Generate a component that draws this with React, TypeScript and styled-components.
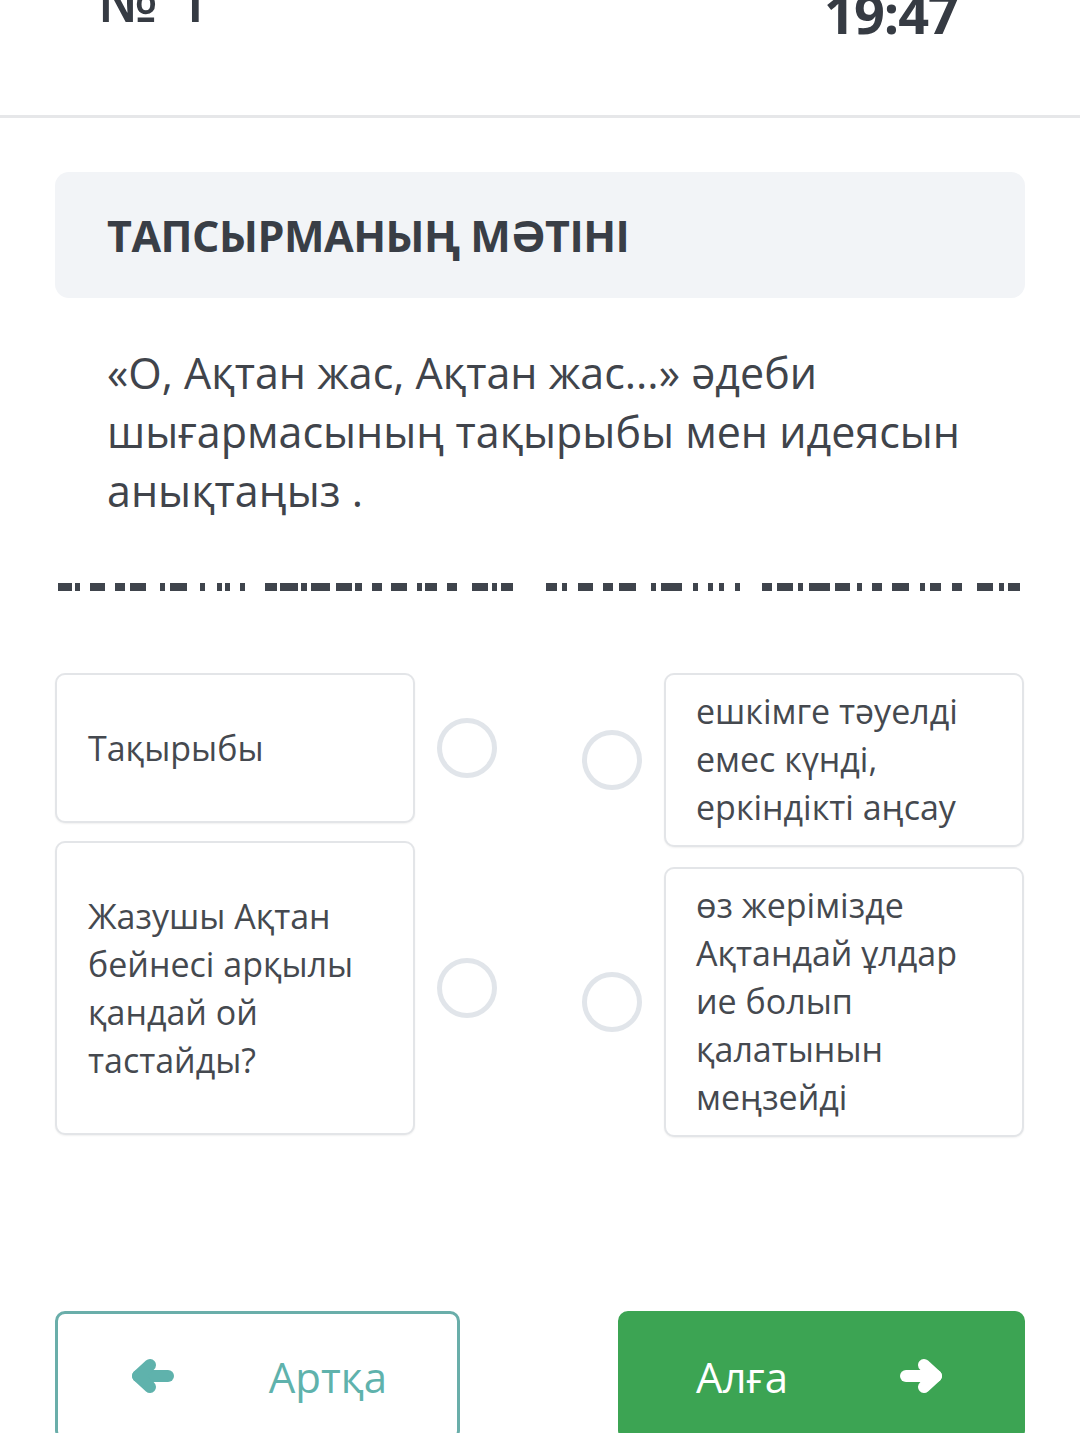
import React from "react";
import styled, { createGlobalStyle } from "styled-components";

const GlobalStyle = createGlobalStyle`
  html, body {
    margin: 0;
    padding: 0;
    background: #ffffff;
    font-family: "Open Sans", "Noto Sans", sans-serif;
  }
`;

// bits of the clipped line below the question, [x, width] in px
const strip: [number, number][] = [
  [58, 14], [75, 5], [90, 15], [115, 10], [130, 16], [160, 5], [170, 17],
  [200, 5], [217, 5], [225, 5], [240, 5], [265, 12], [280, 18], [301, 6],
  [311, 19], [336, 16], [355, 7], [372, 10], [391, 16], [417, 5], [425, 12],
  [447, 10], [472, 16], [492, 5], [501, 12], [546, 11], [562, 5], [578, 15],
  [603, 10], [619, 17], [651, 5], [661, 21], [693, 5], [708, 5], [719, 5],
  [735, 5], [762, 10], [777, 16], [798, 5], [809, 21], [835, 15], [857, 5],
  [872, 10], [892, 17], [920, 5], [930, 11], [952, 10], [977, 16], [999, 5],
  [1008, 12],
];

const leftItems = [
  { text: "Тақырыбы" },
  { text: "Жазушы Ақтан бейнесі арқылы қандай ой тастайды?" },
];

const rightItems = [
  { text: "ешкімге тәуелді емес күнді, еркіндікті аңсау" },
  { text: "өз жерімізде Ақтандай ұлдар ие болып қалатынын меңзейді" },
];

const Arrow = ({ dir }: { dir: "left" | "right" }) => (
  <svg
    width="44"
    height="36"
    viewBox="0 0 44 36"
    style={dir === "right" ? { transform: "scaleX(-1)" } : undefined}
  >
    <g fill="none" stroke="currentColor" strokeWidth="12" strokeLinecap="round" strokeLinejoin="round">
      <line x1="8" y1="18" x2="38" y2="18" />
      <polyline points="20,7 8,18 20,29" />
    </g>
  </svg>
);

export default function App() {
  return (
    <Page>
      <GlobalStyle />
      <TopBar>
        <TaskNo>№ 1</TaskNo>
        <Timer>19:47</Timer>
      </TopBar>

      <TitleCard>
        <TitleText>ТАПСЫРМАНЫҢ МӘТІНІ</TitleText>
      </TitleCard>

      <Question>«О, Ақтан жас, Ақтан жас...» әдеби шығармасының тақырыбы мен идеясын анықтаңыз .</Question>

      <Strip width="1080" height="10" viewBox="0 0 1080 10">
        {strip.map(([x, w], i) => (
          <rect key={i} x={x} y={1} width={w} height={8} fill="#3f444c" />
        ))}
      </Strip>

      <Matching>
        <Column gap={18}>
          {leftItems.map((item, i) => (
            <Pair key={i}>
              <Option side="left">{item.text}</Option>
              <Dot />
            </Pair>
          ))}
        </Column>
        <Column gap={20}>
          {rightItems.map((item, i) => (
            <Pair key={i}>
              <Dot />
              <Option side="right">{item.text}</Option>
            </Pair>
          ))}
        </Column>
      </Matching>

      <Nav>
        <NavButton variant="back">
          <Arrow dir="left" />
          <span>Артқа</span>
        </NavButton>
        <NavButton variant="next">
          <span>Алға</span>
          <Arrow dir="right" />
        </NavButton>
      </Nav>
    </Page>
  );
}

const Page = styled.div`
  width: 1080px;
  min-height: 1433px;
  overflow: hidden;
  background: #ffffff;
`;

const TopBar = styled.div`
  height: 115px;
  display: flex;
  justify-content: space-between;
  align-items: flex-start;
  padding: 0 122px 0 98px;
  border-bottom: 3px solid #e6e7e9;
  overflow: hidden;
  box-sizing: content-box;
`;

const TaskNo = styled.div`
  font-size: 58px;
  line-height: 56px;
  font-weight: 600;
  color: #363b43;
  margin-top: -28px;
  word-spacing: 4px;
`;

const Timer = styled.div`
  font-size: 54px;
  line-height: 56px;
  font-weight: 700;
  color: #363b43;
  margin-top: -15px;
  letter-spacing: -1px;
`;

const TitleCard = styled.div`
  margin: 54px 55px 0;
  height: 126px;
  border-radius: 14px;
  background: #f2f4f7;
  display: flex;
  align-items: center;
  padding: 0 52px;
`;

const TitleText = styled.div`
  font-size: 43px;
  font-weight: 700;
  color: #393e46;
  letter-spacing: -0.5px;
`;

const Question = styled.p`
  margin: 45px 80px 0 107px;
  font-size: 43px;
  line-height: 59px;
  color: #40444b;
`;

const Strip = styled.svg`
  display: block;
  margin-top: 62px;
`;

const Matching = styled.div`
  display: flex;
  justify-content: space-between;
  padding: 0 55px;
  margin-top: 81px;
`;

const Column = styled.div<{ gap: number }>`
  display: flex;
  flex-direction: column;
  gap: ${({ gap }) => gap}px;
  width: 443px;
`;

const Pair = styled.div`
  display: flex;
  align-items: center;
  gap: 22px;
`;

const Option = styled.div<{ side: "left" | "right" }>`
  width: 360px;
  box-sizing: border-box;
  border: 2px solid #e3e5e8;
  border-radius: 10px;
  background: #ffffff;
  box-shadow: 0 1px 2px rgba(0, 0, 0, 0.06);
  padding: ${({ side }) => (side === "left" ? "49px 30px 49px 31px" : "12px 30px 14px 30px")};
  font-size: 34px;
  line-height: 48px;
  color: #45494f;
`;

const Dot = styled.div`
  width: 60px;
  height: 60px;
  flex: none;
  box-sizing: border-box;
  border: 5px solid #e1e5ea;
  border-radius: 50%;
`;

const Nav = styled.div`
  display: flex;
  justify-content: space-between;
  padding: 0 55px;
  margin-top: 174px;
`;

const NavButton = styled.div<{ variant: "back" | "next" }>`
  width: ${({ variant }) => (variant === "back" ? "405px" : "407px")};
  height: 130px;
  box-sizing: border-box;
  border-radius: 10px;
  display: flex;
  align-items: center;
  justify-content: space-between;
  font-size: 42px;
  padding: ${({ variant }) => (variant === "back" ? "0 70px 0 72px" : "0 78px 0 75px")};
  border: 3px solid ${({ variant }) => (variant === "back" ? "#6aaeaa" : "#3ca453")};
  background: ${({ variant }) => (variant === "back" ? "#ffffff" : "#3ca453")};
  color: ${({ variant }) => (variant === "back" ? "#5fb2ac" : "#ffffff")};
`;
